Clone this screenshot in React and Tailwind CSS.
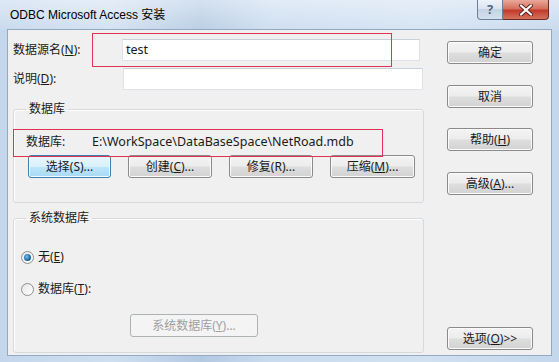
import React from 'react';
import clsx from 'clsx';

const ui = "font-[family-name:'Noto_Sans','Noto_Sans_CJK_SC',sans-serif]";

// Win7 style push button
const Btn = ({ children, className, focus, disabled }) => (
  <div
    className={clsx(
      'flex h-[23px] shrink-0 items-center justify-center rounded-[3px] border text-[12px] leading-none',
      focus
        ? 'border-[#3c7fb1] bg-[linear-gradient(#eaf6fd,#d9f0fc_50%,#bee6fd_50%,#a7d9f5)] text-[#1a1a1a] shadow-[inset_0_0_0_1px_#f4fbff]'
        : disabled
          ? 'border-[#adb2b5] bg-[#f4f4f4] text-[#a0a0a0]'
          : 'border-[#8a8a8a] bg-[linear-gradient(#f4f4f4,#ececec_48%,#dedede_52%,#d2d2d2)] text-[#1a1a1a] shadow-[inset_0_0_0_1px_#fbfbfb]',
      className
    )}
  >
    {children}
  </div>
);

const Radio = ({ checked }) => (
  <span className="flex h-[13px] w-[13px] items-center justify-center rounded-full border border-[#8e8f8f] bg-[linear-gradient(135deg,#e6e6e6,#ffffff)]">
    {checked && (
      <span className="h-[7px] w-[7px] rounded-full bg-[radial-gradient(circle_at_40%_40%,#7cc3ec,#1f6ea6_55%,#0f4a78)]" />
    )}
  </span>
);

const Field = ({ className }) => (
  <div className={clsx('h-[22px] border border-[#dde3e9] border-t-[#c9d0d8] bg-white', className)} />
);

export default function App() {
  return (
    <div className={clsx(ui, 'flex h-[362px] w-[559px] flex-col overflow-hidden bg-[linear-gradient(90deg,#c3d6ec,#cfdff1_20%,#b3c9e2_36%,#c9dbef_48%,#d1e1f2_75%,#c4d7ec)] text-[#1a1a1a]')}>
      {/* title bar */}
      <div className="flex h-[30px] shrink-0 items-start bg-[linear-gradient(180deg,rgba(255,255,255,0.45),rgba(255,255,255,0.1))]">
        <div className="pl-[10px] pt-[7px] font-[family-name:'Liberation_Sans','Noto_Sans_CJK_SC',sans-serif] text-[12px] leading-[16px] text-black">
          ODBC Microsoft Access 安装
        </div>
        <div className="ml-auto mr-[10px] flex h-[20px]">
          <div className="flex w-[26px] items-center justify-center rounded-bl-[4px] border border-t-0 border-[#6d7f96] bg-[linear-gradient(#eef3f9,#d8e3ef_50%,#c4d3e4_50%,#d3e0ee)] text-[13px] font-bold leading-none text-[#55677e]">
            ?
          </div>
          <div className="flex w-[46px] items-center justify-center rounded-br-[4px] border border-l-0 border-t-0 border-[#6b2a25] bg-[linear-gradient(#e9a99b,#d7705f_45%,#c33a2c_55%,#d5735c)]">
            <svg width="14" height="12" viewBox="0 0 14 12">
              <path d="M2 1.5 L12 10.5 M12 1.5 L2 10.5" stroke="#5a2620" strokeWidth="4" strokeLinecap="round" />
              <path d="M2 1.5 L12 10.5 M12 1.5 L2 10.5" stroke="#ffffff" strokeWidth="2.2" strokeLinecap="round" />
            </svg>
          </div>
        </div>
      </div>

      {/* client area */}
      <div className="relative mx-[8px] flex h-[325px] shrink-0 bg-[#f0f0f0] text-[12px] shadow-[0_0_0_1px_#93a9c2]">
        {/* left column */}
        <div className="flex w-[416px] flex-col pl-[5px]">
          <div className="mt-[9px] flex items-center">
            <span className="w-[109px]">数据源名(<u>N</u>):</span>
            <div className="flex h-[22px] w-[298px] items-center border border-[#dde3e9] border-t-[#c9d0d8] bg-white pl-[3px] text-[12.5px]">
              test
            </div>
          </div>
          <div className="mt-[7px] flex items-center">
            <span className="w-[110px]">说明(<u>D</u>):</span>
            <Field className="w-[300px]" />
          </div>

          <fieldset className="mt-[11px] h-[102px] rounded-[3px] border border-[#d5dadf] px-[7px] shadow-[inset_1px_1px_0_#fff]">
            <legend className="ml-[5px] px-[3px] leading-[16px]">数据库</legend>
            <div className="mt-[17px] flex h-[16px] items-center pl-[5px]">
              <span className="w-[66px]">数据库:</span>
              <span className="text-[12.5px]">E:\WorkSpace\DataBaseSpace\NetRoad.mdb</span>
            </div>
            <div className="ml-[7px] mt-[5px] flex gap-[17px]">
              <Btn focus className="w-[83px]">选择(S)...</Btn>
              <Btn className="w-[84px]">创建(<u>C</u>)...</Btn>
              <Btn className="w-[84px]">修复(R)...</Btn>
              <Btn className="w-[85px]">压缩(<u>M</u>)...</Btn>
            </div>
          </fieldset>

          <fieldset className="mt-[7px] h-[143px] rounded-[3px] border border-[#d5dadf] px-[7px] shadow-[inset_1px_1px_0_#fff]">
            <legend className="ml-[5px] px-[3px] leading-[16px]">系统数据库</legend>
            <div className="mt-[23px] flex h-[16px] items-center gap-[4px]">
              <Radio checked />
              <span>无(<u>E</u>)</span>
            </div>
            <div className="mt-[16px] flex h-[16px] items-center gap-[4px]">
              <Radio />
              <span>数据库(<u>T</u>):</span>
            </div>
            <Btn disabled className="ml-[109px] mt-[17px] w-[128px]">系统数据库(<u>Y</u>)...</Btn>
          </fieldset>
        </div>

        {/* right column */}
        <div className="ml-[23px] flex w-[86px] flex-col pb-[5px] pt-[11px]">
          <Btn>确定</Btn>
          <Btn className="mt-[21px]">取消</Btn>
          <Btn className="mt-[20px]">帮助(<u>H</u>)</Btn>
          <Btn className="mt-[21px]">高级(<u>A</u>)...</Btn>
          <Btn className="mt-auto">选项(<u>O</u>)&gt;&gt;</Btn>
        </div>

        {/* red annotation boxes */}
        <div className="pointer-events-none absolute left-[84px] top-[3px] h-[34px] w-[300px] border border-[#e0334f]" />
        <div className="pointer-events-none absolute left-[5px] top-[99px] h-[28px] w-[370px] border border-[#e0334f]" />
      </div>
    </div>
  );
}
